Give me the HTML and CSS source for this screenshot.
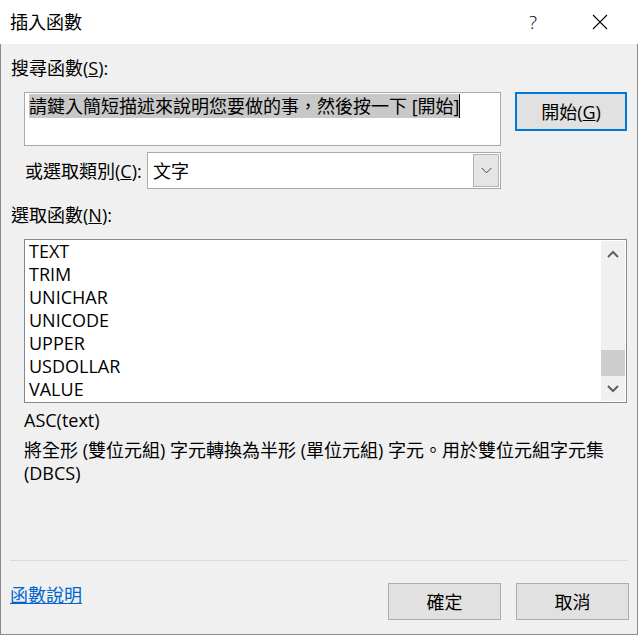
FILE: index.html
```html
<!DOCTYPE html>
<html lang="zh-Hant">
<head>
<meta charset="utf-8">
<title>插入函數</title>
<link rel="stylesheet" href="styles.css">
</head>
<body>
<div class="dialog">
  <div class="titlebar">
    <span class="title">插入函數</span>
    <span class="help">?</span>
    <span class="close">
      <svg width="16" height="16" viewBox="0 0 16 16"><path d="M1 1 L15 15 M15 1 L1 15" stroke="#000" stroke-width="1.1" fill="none"/></svg>
    </span>
  </div>
  <div class="content">
    <div class="label">搜尋函數(<u>S</u>):</div>
    <div class="search-row">
      <div class="search-box"><span class="sel">請鍵入簡短描述來說明您要做的事，然後按一下 [開始]</span><span class="caret"></span></div>
      <button class="btn btn-go">開始(<u>G</u>)</button>
    </div>
    <div class="cat-row">
      <span class="cat-label">或選取類別(<u>C</u>):</span>
      <div class="select">
        <span class="select-text">文字</span>
        <span class="dd">
          <svg width="11" height="7" viewBox="0 0 11 7"><path d="M0.5 0.8 L5.5 5.8 L10.5 0.8" stroke="#444" stroke-width="1" fill="none"/></svg>
        </span>
      </div>
    </div>
    <div class="label label-fn">選取函數(<u>N</u>):</div>
    <div class="list">
      <ul class="items">
        <li>TEXT</li>
        <li>TRIM</li>
        <li>UNICHAR</li>
        <li>UNICODE</li>
        <li>UPPER</li>
        <li>USDOLLAR</li>
        <li>VALUE</li>
      </ul>
      <div class="scrollbar">
        <div class="sb-btn sb-up">
          <svg width="12" height="8" viewBox="0 0 12 8"><path d="M1 7 L6 2 L11 7" stroke="#606060" stroke-width="2" fill="none"/></svg>
        </div>
        <div class="sb-track"><div class="sb-thumb"></div></div>
        <div class="sb-btn sb-down">
          <svg width="12" height="8" viewBox="0 0 12 8"><path d="M1 1 L6 6 L11 1" stroke="#606060" stroke-width="2" fill="none"/></svg>
        </div>
      </div>
    </div>
    <div class="desc">
      <p class="syntax">ASC(text)</p>
      <p class="explain">將全形 (雙位元組) 字元轉換為半形 (單位元組) 字元。用於雙位元組字元集 (DBCS)</p>
    </div>
  </div>
  <div class="footer">
    <div class="sep"></div>
    <div class="footer-row">
      <a class="help-link" href="#">函數說明</a>
      <div class="spacer"></div>
      <button class="btn btn-ok">確定</button>
      <button class="btn btn-cancel">取消</button>
    </div>
  </div>
</div>
</body>
</html>
```

FILE: styles.css
```css
* { box-sizing: border-box; }

html, body {
  margin: 0;
  padding: 0;
  background: #f0f0f0;
}

body {
  width: 638px;
  height: 635px;
  overflow: hidden;
  font-family: "Open Sans", "Noto Sans CJK TC", sans-serif;
  font-size: 18px;
  color: #000;
}

.dialog {
  width: 638px;
  height: 635px;
  display: flex;
  flex-direction: column;
  background: #f0f0f0;
  border: 1px solid #8a8a8a;
  border-top: none;
}

.titlebar {
  height: 44px;
  flex: none;
  background: #fff;
  display: flex;
  align-items: center;
  padding-left: 10px;
  margin: 0 -1px;
}

.title {
  font-size: 18px;
  line-height: 24px;
  flex: 1;
}

.help {
  width: 20px;
  text-align: center;
  font-size: 19px;
  font-weight: 300;
  line-height: 24px;
  margin-right: 49px;
}

.close {
  width: 16px;
  height: 16px;
  display: flex;
  margin-right: 30px;
}

.content {
  flex: 1;
  display: flex;
  flex-direction: column;
}

.label {
  line-height: 24px;
  margin: 12px 0 0 10px;
  white-space: nowrap;
}

.label-fn {
  margin-top: 14px;
}

.search-row {
  display: flex;
  margin: 12px 0 0 23px;
}

.search-box {
  width: 477px;
  height: 54px;
  background: #fff;
  border: 1px solid #a9a9a9;
  padding: 1px 4px;
  line-height: 24px;
  display: flex;
  align-items: flex-start;
}

.sel {
  background: #c8c8c8;
  white-space: nowrap;
}

.caret {
  width: 1px;
  height: 24px;
  background: #000;
}

.btn {
  font-family: inherit;
  font-size: 18px;
  color: #000;
  background: #e1e1e1;
  border: 1px solid #adadad;
  padding: 0;
  line-height: 24px;
}

.btn-go {
  width: 112px;
  height: 39px;
  margin-left: 14px;
  border: 2px solid #0078d7;
}

.cat-row {
  display: flex;
  align-items: center;
  margin: 6px 0 0 24px;
  height: 37px;
}

.cat-label {
  width: 122px;
  line-height: 24px;
  white-space: nowrap;
}

.select {
  width: 354px;
  height: 37px;
  background: #fff;
  border: 1px solid #a9a9a9;
  display: flex;
  align-items: center;
  padding: 1px 1px 1px 5px;
}

.select-text {
  flex: 1;
  line-height: 24px;
}

.dd {
  width: 26px;
  height: 33px;
  background: #e5e5e5;
  border: 1px solid #b4b4b4;
  display: flex;
  align-items: center;
  justify-content: center;
}

.list {
  margin: 12px 0 0 23px;
  width: 603px;
  height: 164px;
  background: #fff;
  border: 1px solid #828790;
  display: flex;
}

.items {
  list-style: none;
  margin: 0;
  padding: 0 0 0 4px;
  flex: 1;
  font-size: 18px;
  line-height: 23px;
}

.scrollbar {
  width: 24px;
  margin: 1px 1px 1px 0;
  background: #f0f0f0;
  display: flex;
  flex-direction: column;
}

.sb-btn {
  display: flex;
  align-items: center;
  justify-content: center;
}

.sb-up { height: 26px; }
.sb-down { height: 25px; }

.sb-track {
  flex: 1;
  display: flex;
  flex-direction: column;
  justify-content: flex-end;
}

.sb-thumb {
  height: 26px;
  background: #cdcdcd;
}

.desc {
  margin: 6px 0 0 23px;
  width: 603px;
}

.desc p {
  margin: 0;
  line-height: 23px;
}

.explain {
  margin-top: 7px !important;
}

.footer {
  flex: none;
  height: 74px;
}

.sep {
  height: 1px;
  background: #dadada;
  margin: 0 9px 0 9px;
}

.footer-row {
  display: flex;
  align-items: flex-start;
  padding: 22px 8px 0 9px;
}

.help-link {
  color: #0066cc;
  line-height: 24px;
  text-decoration: underline;
}

.spacer { flex: 1; }

.btn-ok, .btn-cancel {
  width: 113px;
  height: 37px;
}

.btn-cancel {
  margin-left: 15px;
}
```
